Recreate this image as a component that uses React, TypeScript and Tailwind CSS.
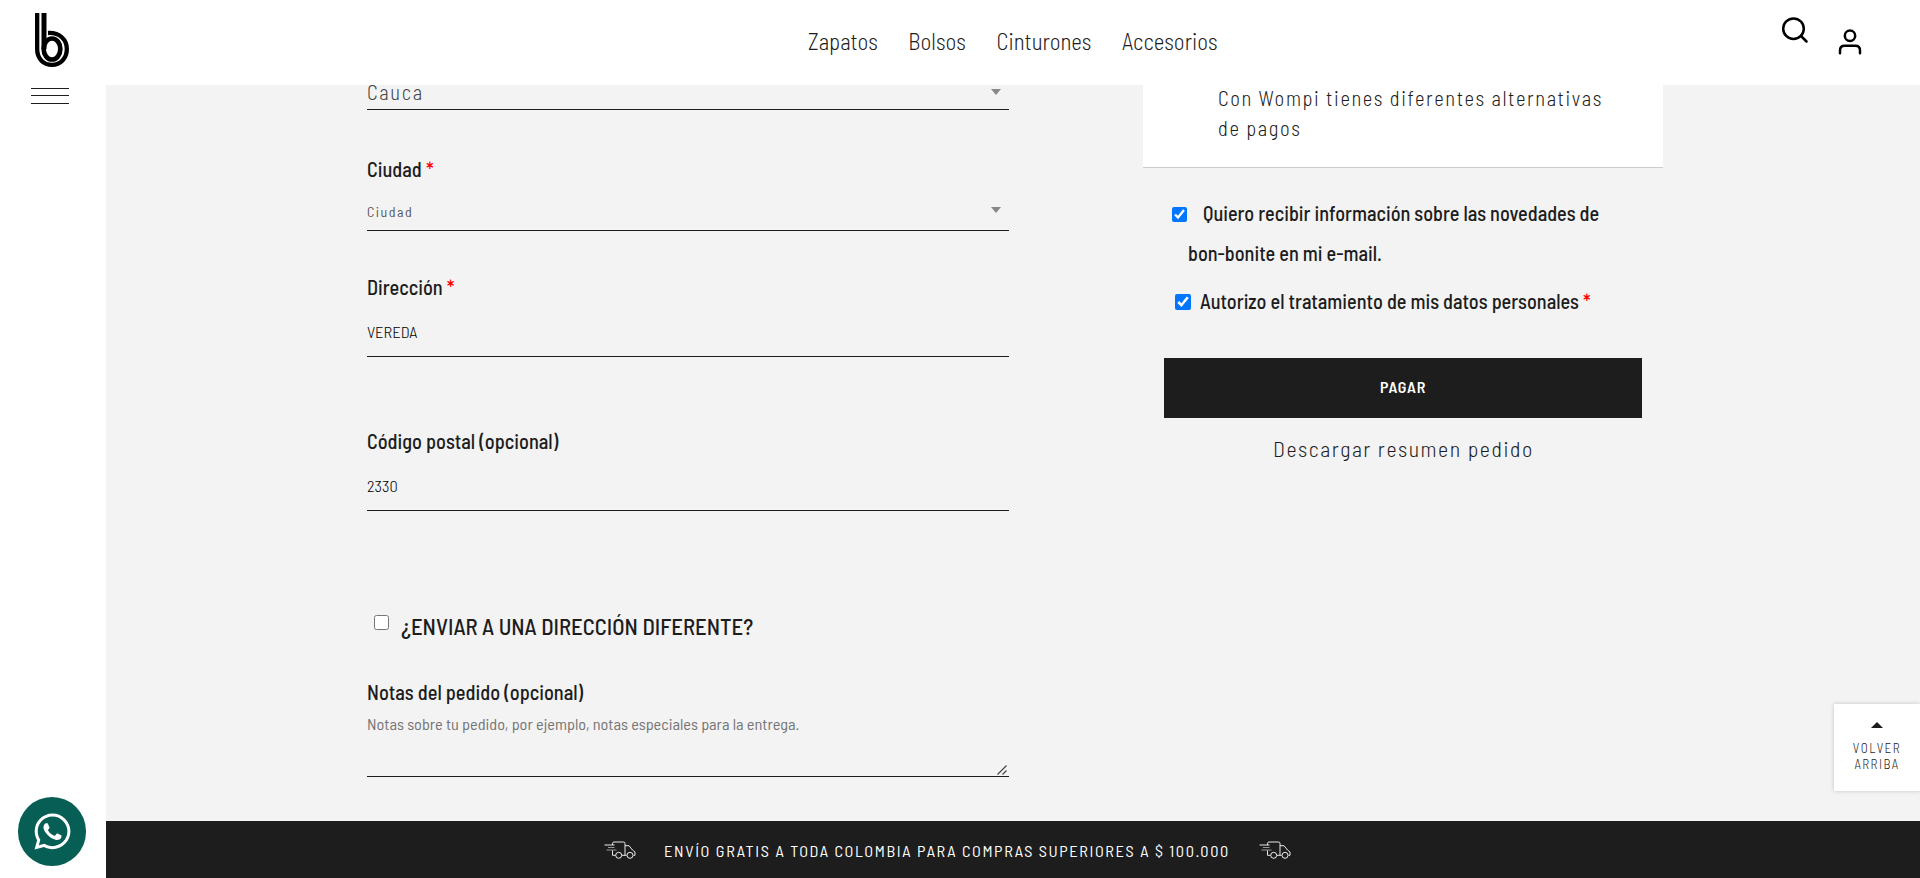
import type { ReactNode } from "react";
import { FaWhatsapp } from "react-icons/fa";

const NAV = ["Zapatos", "Bolsos", "Cinturones", "Accesorios"];

function Logo() {
  return (
    <svg className="block h-[54px] w-[34px]" viewBox="0 0 102 162" fill="none" stroke="#000">
      <path d="M6.500 0V108C6.500 138 26 155.500 51 155.500S95.500 136 95.500 108S74 58 39 60" strokeWidth="13" />
      <path d="M27 0V108" strokeWidth="15" />
      <ellipse cx="51" cy="108" rx="25" ry="31.500" strokeWidth="14" />
    </svg>
  );
}

function Truck({ className }: { className?: string }) {
  return (
    <svg
      className={`block h-[18px] w-8 shrink-0 ${className ?? ""}`}
      viewBox="0 0 32 18"
      fill="none"
      stroke="#fff"
      strokeWidth="0.9"
    >
      <path d="M8.500 4V2.500Q8.500 1 10 1H19.500Q21 1 21 2.500V14.300H18M11.500 14.300H8.500V9.500M21 4.700H25L28.500 9L31 11V14.300H29.500M21 14.300H22.500" />
      <circle cx="14.700" cy="14.300" r="3" />
      <circle cx="26" cy="14.300" r="3" />
      <path d="M0.500 4H10.500" />
      <path d="M4 6.500H10.500M2.500 9H12.500" opacity="0.6" />
    </svg>
  );
}

function Label({ children, className, required }: { children: ReactNode; className: string; required?: boolean }) {
  return (
    <label className={`block text-[20.300px] leading-7 font-medium whitespace-nowrap ${className}`}>
      {children}
      {required && <span className="text-[#ff0000]"> *</span>}
    </label>
  );
}

function Caret({ className }: { className: string }) {
  return <span className={`block h-0 w-0 border-x-[5px] border-t-[6px] border-x-transparent border-t-[#888] ${className}`} />;
}

export default function App() {
  return (
    <div className="relative flex h-[878px] w-full overflow-hidden bg-white font-['Barlow_Semi_Condensed','Barlow_Condensed','Roboto_Condensed',sans-serif] text-[#1d1d1d]">
      <aside className="flex w-[106px] shrink-0 flex-col">
        <div className="ml-[35px] pt-[13px]">
          <Logo />
        </div>
        <button className="mt-[21px] ml-[31px] flex w-[38px] flex-col" aria-label="Menú">
          <span className="h-px w-full bg-[#1d1d1d]" />
          <span className="mt-1.5 h-px w-full bg-[#1d1d1d]" />
          <span className="mt-[7px] h-px w-full bg-[#1d1d1d]" />
        </button>
        <a className="mt-auto mb-3 ml-[18px] flex h-[69px] w-[68px] items-center justify-center rounded-full bg-[#075e54]">
          <FaWhatsapp className="h-[41px] w-[41px] text-white" />
        </a>
      </aside>

      <div className="flex min-w-0 flex-1 flex-col">
        <header className="flex h-[85px] shrink-0 items-start">
          <nav className="flex gap-[30.600px] pt-[26px] pl-[702px] text-[22.800px] leading-[30px] font-light">
            {NAV.map((item) => (
              <a key={item}>{item}</a>
            ))}
          </nav>
          <div className="mr-[57px] ml-auto flex items-start">
            <svg className="mt-4 block h-7 w-7" viewBox="0 0 28 28" fill="none" stroke="#000" strokeWidth="2.500" strokeLinecap="round">
              <circle cx="13.500" cy="12.700" r="10.300" />
              <path d="M21 20L26.500 25.500" />
            </svg>
            <svg className="mt-[29px] ml-[29px] block h-[27px] w-[26px]" viewBox="0 0 26 27" fill="none" stroke="#000" strokeWidth="2.500" strokeLinecap="round">
              <circle cx="13" cy="6.700" r="5.200" />
              <path d="M3 24.300V21.500Q3 16.800 7.700 16.800H18.300Q23 16.800 23 21.500V24.300" />
            </svg>
          </div>
        </header>

        <main className="flex min-h-0 flex-1 items-start overflow-hidden bg-[#f3f3f3]">
          <section className="ml-[261px] w-[642px] shrink-0">
            <div className="flex h-[25px] justify-between border-b border-[#1d1d1d] pr-2">
              <span className="text-[20.500px] leading-[13px] font-light tracking-[1.640px] text-[#444]">Cauca</span>
              <Caret className="mt-1" />
            </div>

            <Label className="mt-[45px]" required>
              Ciudad
            </Label>
            <div className="mt-[18px] flex h-[30px] justify-between border-b border-[#1d1d1d] pr-2">
              <span className="text-[14px] leading-[22px] tracking-[1.500px] text-[#555]">Ciudad</span>
              <Caret className="mt-1.5" />
            </div>

            <Label className="mt-[42px]" required>
              Dirección
            </Label>
            <input
              className="mt-5 block h-9 w-full border-b border-[#1d1d1d] pb-[14px] text-[16.400px] leading-[21px] font-light text-black outline-none"
              defaultValue="VEREDA"
            />

            <Label className="mt-[70px]">Código postal (opcional)</Label>
            <input
              className="mt-5 block h-9 w-full border-b border-[#1d1d1d] pb-[14px] text-[16.400px] leading-[21px] font-light text-black outline-none"
              defaultValue="2330"
            />

            <label className="mt-[99px] flex h-[30px] items-start">
              <input type="checkbox" className="mt-[5px] ml-[7px] h-[15px] w-[15px]" />
              <span className="mt-px ml-3 text-[22.700px] leading-[30px] font-medium whitespace-nowrap">
                ¿ENVIAR A UNA DIRECCIÓN DIFERENTE?
              </span>
            </label>

            <Label className="mt-[38px]">Notas del pedido (opcional)</Label>
            <div className="relative -mt-px">
              <textarea
                className="block h-[72px] w-full resize-none border-b border-[#1d1d1d] pt-[9px] text-[16.270px] leading-5 outline-none placeholder:text-[#757575]"
                placeholder="Notas sobre tu pedido, por ejemplo, notas especiales para la entrega."
              />
              <svg className="absolute right-0.5 bottom-0.5 h-2.5 w-2.5" viewBox="0 0 10 10" stroke="#444" strokeWidth="1.200">
                <path d="M0.500 9.500L9.500 0.500M5.500 9.500L9.500 5.500" />
              </svg>
            </div>
          </section>

          <section className="ml-[134px] w-[520px] shrink-0">
            <div className="flex h-[83px] items-start border-b border-[#ccc] bg-white pl-[75px]">
              <p className="-mt-0.5 w-[400px] text-[20.500px] leading-[30px] font-light tracking-[1.600px]">
                Con Wompi tienes diferentes alternativas de pagos
              </p>
            </div>

            <label className="mt-[25px] block text-[20.220px] leading-10 font-medium whitespace-nowrap">
              <span className="flex items-start">
                <input type="checkbox" defaultChecked className="mt-[14px] ml-[29px] h-[15px] w-[15px]" />
                <span className="ml-4">Quiero recibir información sobre las novedades de</span>
              </span>
              <span className="ml-[45px] block">bon-bonite en mi e-mail.</span>
            </label>

            <label className="mt-[13px] flex items-start text-[20.220px] leading-[30px] font-medium whitespace-nowrap">
              <input type="checkbox" defaultChecked className="mt-2 ml-8 h-4 w-4" />
              <span className="ml-[9px]">
                Autorizo el tratamiento de mis datos personales <span className="text-[#ff0000]">*</span>
              </span>
            </label>

            <button className="mt-[42px] ml-[21px] flex h-[60px] w-[478px] items-center justify-center bg-[#1d1d1d] pb-[3px] text-[16px] font-semibold tracking-[0.800px] text-white">
              PAGAR
            </button>
            <a className="mt-[15px] block pl-px text-center text-[21.800px] leading-[30px] font-light tracking-[1.560px]">
              Descargar resumen pedido
            </a>
          </section>
        </main>

        <footer className="flex h-[57px] shrink-0 items-center bg-[#1d1d1d] pl-[498px] text-white">
          <Truck />
          <p className="ml-[28px] pt-0.5 text-[16.300px] leading-[22px] tracking-[1.610px] whitespace-nowrap">
            ENVÍO GRATIS A TODA COLOMBIA PARA COMPRAS SUPERIORES A $ 100.000
          </p>
          <Truck className="ml-[29px]" />
        </footer>
      </div>

      <a className="absolute top-[704px] right-0 flex h-[87px] w-[86px] flex-col items-center bg-white text-center text-[13px] leading-4 font-light tracking-[1.500px] shadow-[0_0_4px_rgba(0,0,0,0.2)]">
        <span className="mt-[18px] block h-0 w-0 border-x-[6px] border-b-[6px] border-x-transparent border-b-[#1d1d1d]" />
        <span className="mt-3">
          VOLVER
          <br />
          ARRIBA
        </span>
      </a>
    </div>
  );
}
